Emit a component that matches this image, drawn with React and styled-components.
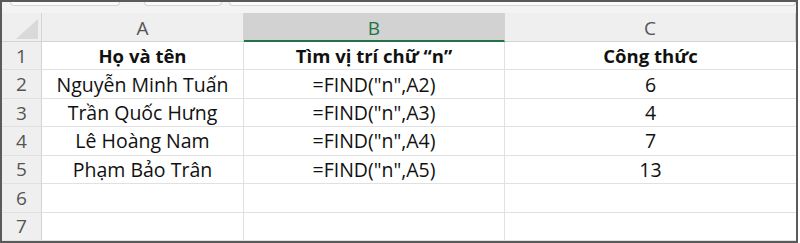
import React from "react";
import styled, { createGlobalStyle } from "styled-components";

const rows = [
  ["Họ và tên", "Tìm vị trí chữ “n”", "Công thức"],
  ["Nguyễn Minh Tuấn", '=FIND("n",A2)', "6"],
  ["Trần Quốc Hưng", '=FIND("n",A3)', "4"],
  ["Lê Hoàng Nam", '=FIND("n",A4)', "7"],
  ["Phạm Bảo Trân", '=FIND("n",A5)', "13"],
  ["", "", ""],
  ["", "", ""],
];

export default function App() {
  return (
    <>
      <Global />
      <Frame>
        <TopStrip>
          <Tab style={{ width: 108 }} />
          <Tab style={{ width: 76, marginLeft: 24 }} />
          <Tab style={{ flex: 1, marginLeft: 7 }} />
        </TopStrip>
        <Sheet>
          <Corner>
            <svg width="30" height="24" viewBox="0 0 30 24">
              <polygon points="27,2 27,22 5,22" fill="#d9d9d9" />
            </svg>
          </Corner>
          <ColHead>A</ColHead>
          <ColHead $selected>B</ColHead>
          <ColHead>C</ColHead>
          {rows.map((r, i) => (
            <React.Fragment key={i}>
              <RowHead>{i + 1}</RowHead>
              {r.map((v, j) => (
                <Cell key={j} $bold={i === 0}>
                  {v}
                </Cell>
              ))}
            </React.Fragment>
          ))}
        </Sheet>
      </Frame>
    </>
  );
}

const Global = createGlobalStyle`
  html, body {
    margin: 0;
    padding: 0;
    background: #ffffff;
  }
`;

const Frame = styled.div`
  width: 798px;
  height: 243px;
  box-sizing: border-box;
  border: 2px solid #5a5a5a;
  display: flex;
  flex-direction: column;
  background: #f3f3f3;
  font-family: "Open Sans", "Liberation Sans", sans-serif;
`;

const TopStrip = styled.div`
  height: 11px;
  display: flex;
  padding: 0 0 0 8px;
  align-items: flex-start;
`;

const Tab = styled.div`
  height: 3px;
  background: #fbfbfb;
  border: 1px solid #d6d6d6;
  border-top: none;
  border-radius: 0 0 5px 5px;
`;

const Sheet = styled.div`
  flex: 1;
  display: grid;
  grid-template-columns: 40px 202px 261px 1fr;
  grid-template-rows: 29px repeat(7, 1fr);
`;

const Corner = styled.div`
  background: #efefef;
  border-right: 1px solid #d4d4d4;
  border-bottom: 1px solid #d4d4d4;
  display: flex;
  align-items: flex-end;
  justify-content: flex-end;
  box-sizing: border-box;
`;

const ColHead = styled.div`
  background: ${(p) => (p.$selected ? "#d2d2d2" : "#efefef")};
  color: ${(p) => (p.$selected ? "#217346" : "#555555")};
  border-right: 1px solid #d4d4d4;
  border-bottom: ${(p) => (p.$selected ? "2px solid #217346" : "1px solid #d4d4d4")};
  box-sizing: border-box;
  display: flex;
  align-items: center;
  justify-content: center;
  font-size: 19px;
  padding-top: 2px;
`;

const RowHead = styled.div`
  background: #efefef;
  color: #555555;
  border-right: 1px solid #d4d4d4;
  border-bottom: 1px solid #e0e0e0;
  box-sizing: border-box;
  display: flex;
  align-items: center;
  justify-content: center;
  font-size: 19px;
`;

const Cell = styled.div`
  background: #ffffff;
  color: #111111;
  border-right: 1px solid #e1e1e1;
  border-bottom: 1px solid #e1e1e1;
  box-sizing: border-box;
  display: flex;
  align-items: center;
  justify-content: center;
  font-size: ${(p) => (p.$bold ? "18.5px" : "19.5px")};
  font-weight: ${(p) => (p.$bold ? 700 : 400)};
  white-space: nowrap;
  &:nth-child(4n) {
    border-right: none;
  }
`;
